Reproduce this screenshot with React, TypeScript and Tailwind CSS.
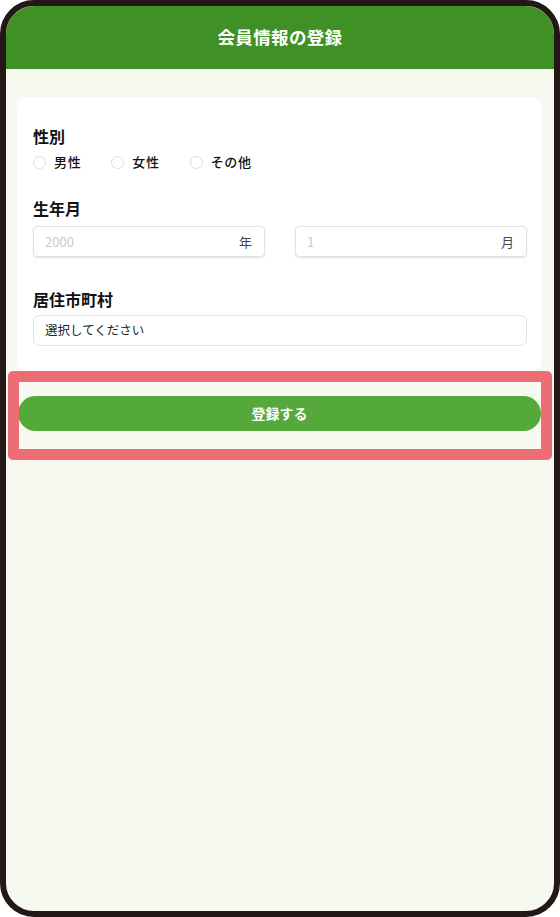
import React from "react";

const jp = { fontFamily: '"Noto Sans CJK JP", "Noto Sans", sans-serif' };

function Radio({ label }: { label: string }) {
  return (
    <label className="flex items-center gap-[8px]">
      <span className="w-[13px] h-[13px] rounded-full border border-[#dcdcdc] bg-white" />
      <span className="text-[13px] font-medium tracking-[0.05em] text-[#111]">{label}</span>
    </label>
  );
}

export default function App() {
  return (
    <div style={jp} className="w-[560px] h-[917px] bg-white">
      <div className="w-full h-full border-[6px] border-[#231815] rounded-[34px] overflow-hidden bg-[#f6f9f0] flex flex-col">
        <div className="h-[63px] shrink-0 bg-[#3f9126] flex items-center justify-center">
          <h1 className="text-white text-[17.5px] font-bold tracking-[0.02em] mt-[-1px]">会員情報の登録</h1>
        </div>
        <div className="pl-[11px] pr-[12px] pt-[28px]">
          <div className="bg-white rounded-[10px] pl-4 pr-[15px] pt-[28px] pb-[25px]">
            <div className="text-[16px] leading-[22px] font-bold text-[#111]">性別</div>
            <div className="mt-[5px] h-[20px] flex items-center gap-[30px]">
              <Radio label="男性" />
              <Radio label="女性" />
              <Radio label="その他" />
            </div>
            <div className="mt-[25px] text-[16px] leading-[22px] font-bold text-[#111]">生年月</div>
            <div className="mt-[7px] grid grid-cols-2 gap-[30px]">
              <div className="h-[31px] flex items-center justify-between pl-[11px] pr-3 border border-[#e2e2e2] rounded-[4px] shadow-[0_1px_2px_rgba(0,0,0,0.12)]">
                <span className="text-[13px] text-[#c8cad0]">2000</span>
                <span className="text-[13px] text-[#444]">年</span>
              </div>
              <div className="h-[31px] flex items-center justify-between pl-[11px] pr-3 border border-[#e2e2e2] rounded-[4px] shadow-[0_1px_2px_rgba(0,0,0,0.12)]">
                <span className="text-[13px] text-[#c8cad0]">1</span>
                <span className="text-[13px] text-[#444]">月</span>
              </div>
            </div>
            <div className="mt-[31px] text-[16px] leading-[22px] font-bold text-[#111]">居住市町村</div>
            <div className="mt-[5px] h-[31px] flex items-center pl-[11px] border border-[#e2e2e2] rounded-[6px]">
              <span className="text-[12.5px] text-[#222]">選択してください</span>
            </div>
          </div>
          <div className="relative mt-[25px] mx-px">
            <button className="w-full h-[35px] rounded-full bg-[#55a93b] text-white text-[14px] font-bold">
              登録する
            </button>
            <div className="absolute top-[-25px] bottom-[-29px] left-[-10px] right-[-11px] border-[11px] border-[#ec6d73] rounded-[5px] pointer-events-none" />
          </div>
        </div>
      </div>
    </div>
  );
}
